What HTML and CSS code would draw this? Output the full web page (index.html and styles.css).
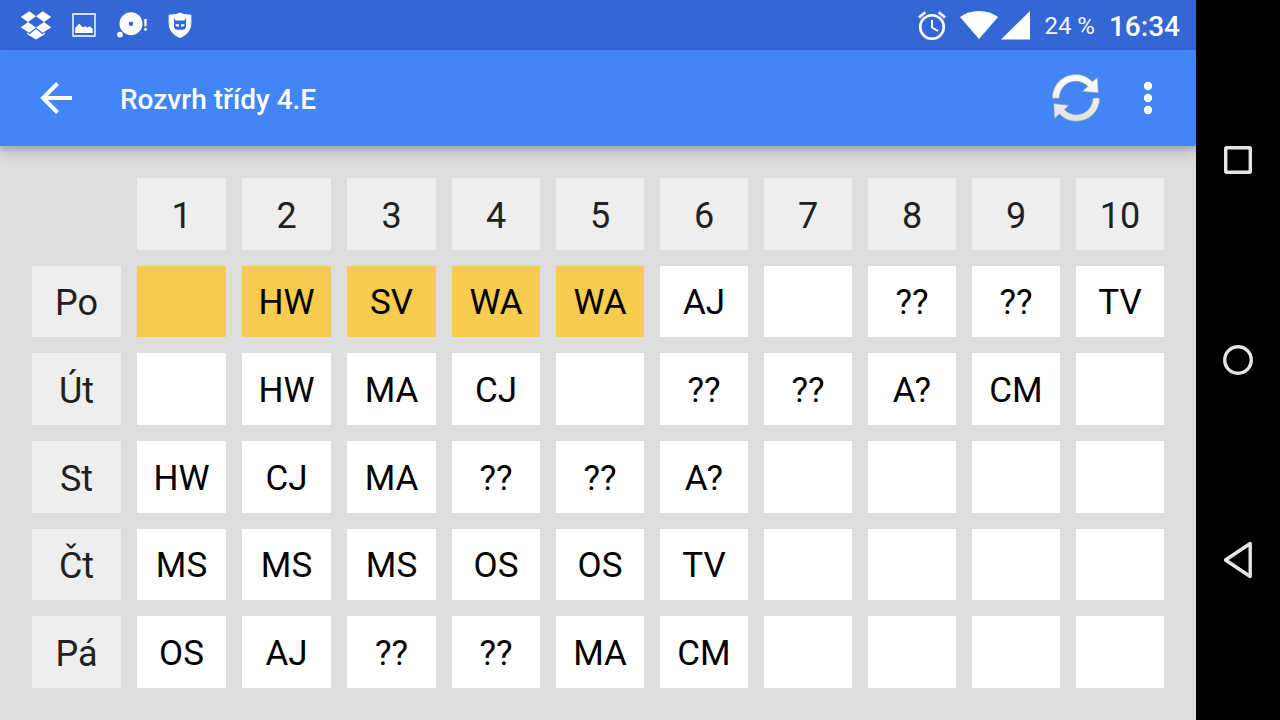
FILE: index.html
```html
<!DOCTYPE html>
<html lang="cs">
<head>
<meta charset="utf-8">
<meta name="viewport" content="width=device-width, initial-scale=1">
<title>Rozvrh třídy 4.E</title>
<link rel="stylesheet" href="styles.css">
</head>
<body>
<div class="device">
  <div class="screen">
    <div class="status">
      <div class="notices">
        <svg width="32" height="32" viewBox="0 0 32 32" fill="#fff" aria-hidden="true"><path d="M.800 8 9.300 2.200 16 7.300 8 13zM31.200 8 22.700 2.200 16 7.300 24 13zM8 13l8 5.500L9.300 23.800.800 18.500zM24 13l-8 5.500 6.700 5.300 8.500-5.300z"/><path d="M7 23.500 9.500 25.200 16 20l6.500 5.200L25 23.500V25l-9 5.500L7 25z"/></svg>
        <svg width="32" height="32" viewBox="0 0 32 32" aria-hidden="true"><path d="M5 5h22v22H5z" fill="none" stroke="#d3dff7" stroke-width="1.800"/><path d="M7.200 24v-5.200l4-4 3.800 3.700 2.200-1.200 2.300 1.300 2-1.400 3.200 2.500V24z" fill="#fff"/></svg>
        <svg width="32" height="32" viewBox="0 0 32 32" aria-hidden="true"><path fill="#fff" fill-rule="evenodd" d="M15 3.200a11.500 11.500 0 1 1 0 23 11.500 11.500 0 0 1 0-23zm0 9.200a2.300 2.300 0 1 0 0 4.600 2.300 2.300 0 0 0 0-4.600z"/><circle cx="4" cy="25.600" r="2.900" fill="#fff"/><path d="M28.200 10h2.500l-.3 7.500h-1.900z" fill="#fff"/><circle cx="29.500" cy="20.500" r="1.400" fill="#fff"/></svg>
        <svg width="32" height="32" viewBox="0 0 32 32" aria-hidden="true"><path fill="#fff" d="M16 3.500C13 5 9 5.700 4.700 5.700V14c0 7 4.500 12.500 11.300 15 6.800-2.500 11.300-8 11.300-15V5.700C23 5.700 19 5 16 3.500z"/><path d="M10.300 8.500 11.500 11.500h9L21.700 8.500 22 13v5q-.8 2.700-3 2.700h-6q-2.200 0-3-2.700v-5z" fill="#3367d6"/><path d="M11.500 15.300h3.500v2.200h-2.300q-1.200-.3-1.200-2.200zm9 0H17v2.200h2.300q1.200-.3 1.200-2.200z" fill="#fff"/></svg>
      </div>
      <div class="system">
        <svg width="30" height="32" viewBox="0 0 30 32" fill="none" stroke="#fff" aria-hidden="true"><circle cx="15" cy="18" r="11.800" stroke-width="2.600"/><path d="M15 11v7.500l6 3.500" stroke-width="2"/><path d="m2 8.500 6.300-5.300M28 8.500l-6.300-5.300" stroke-width="2.600"/></svg>
        <svg class="wifi" width="40" height="30" viewBox="0 0 40 30" fill="#fff" aria-hidden="true"><path d="M1 7Q9 1 20 1t19 6L20 29z"/></svg>
        <svg class="signal" width="30" height="30" viewBox="0 0 30 30" fill="#fff" aria-hidden="true"><path d="M29 1v28.500H0z"/></svg>
        <span class="battery">24 %</span>
        <time class="clock">16:34</time>
      </div>
    </div>
    <header class="bar">
      <button class="tool" aria-label="Zpět"><svg width="32" height="32" viewBox="0 0 32 32" fill="none" stroke="#fff" stroke-width="4" aria-hidden="true"><path d="M17.500 1.500 3 16l14.500 14.500M3 16h29"/></svg></button>
      <h1 class="title">Rozvrh třídy 4.E</h1>
      <button class="tool" aria-label="Obnovit"><svg width="48" height="48" viewBox="0 0 48 48" aria-hidden="true"><defs><linearGradient id="silver" x1="0" y1="0" x2="0" y2="48" gradientUnits="userSpaceOnUse"><stop stop-color="#fff"/><stop offset="1" stop-color="#e0e0e0"/></linearGradient></defs><g fill="url(#silver)" stroke="#8798ae" stroke-width=".6"><path d="M.300 24.200C.500 10.500 10.500.500 23.800.500c7 0 12.500 2.700 16.500 7.200L45.500 3.500l.8 15.300L30.500 17.500l5.200-5C33 9.300 28.500 7.300 23.800 7.300 14.500 7.300 7.500 14.500 7.200 24.200z"/><path d="M47.700 24C47.500 37.500 37.500 47.300 24.200 47.300c-7 0-12.700-2.900-16.700-7.300l-5 4.500L1.700 29.500l15.300 1.800-4.500 4.200c2.800 3.200 7 5.200 11.700 5.200 9.300 0 16.500-7.200 16.800-16.700z"/></g></svg></button>
      <button class="tool" aria-label="Další možnosti"><svg width="12" height="36" viewBox="0 0 12 36" fill="#fff" aria-hidden="true"><circle cx="6" cy="6" r="4.200"/><circle cx="6" cy="18" r="4.200"/><circle cx="6" cy="30" r="4.200"/></svg></button>
    </header>
    <main class="content">
      <table class="timetable">
        <colgroup><col class="wide" span="4"><col span="7"></colgroup>
        <tbody>
          <tr><td class="corner"></td><th scope="col">1</th><th scope="col">2</th><th scope="col">3</th><th scope="col">4</th><th scope="col">5</th><th scope="col">6</th><th scope="col">7</th><th scope="col">8</th><th scope="col">9</th><th scope="col">10</th></tr>
          <tr><th scope="row">Po</th><td class="past"></td><td class="past">HW</td><td class="past">SV</td><td class="past">WA</td><td class="past">WA</td><td>AJ</td><td></td><td>??</td><td>??</td><td>TV</td></tr>
          <tr><th scope="row">Út</th><td></td><td>HW</td><td>MA</td><td>CJ</td><td></td><td>??</td><td>??</td><td>A?</td><td>CM</td><td></td></tr>
          <tr><th scope="row">St</th><td>HW</td><td>CJ</td><td>MA</td><td>??</td><td>??</td><td>A?</td><td></td><td></td><td></td><td></td></tr>
          <tr><th scope="row">Čt</th><td>MS</td><td>MS</td><td>MS</td><td>OS</td><td>OS</td><td>TV</td><td></td><td></td><td></td><td></td></tr>
          <tr><th scope="row">Pá</th><td>OS</td><td>AJ</td><td>??</td><td>??</td><td>MA</td><td>CM</td><td></td><td></td><td></td><td></td></tr>
        </tbody>
      </table>
    </main>
  </div>
  <nav class="keys" aria-label="Systémová navigace">
    <button class="key" aria-label="Přehled"><svg width="40" height="40" viewBox="0 0 40 40" fill="none" stroke="#e6e6e6" stroke-width="3.400" aria-hidden="true"><rect x="7.700" y="7.700" width="24.600" height="24.600" rx="1"/></svg></button>
    <button class="key" aria-label="Domů"><svg width="40" height="40" viewBox="0 0 40 40" fill="none" stroke="#e6e6e6" stroke-width="3.400" aria-hidden="true"><circle cx="20" cy="20" r="13.300"/></svg></button>
    <button class="key" aria-label="Zpět"><svg width="40" height="40" viewBox="0 0 40 40" fill="none" stroke="#e6e6e6" stroke-width="3.400" stroke-linejoin="round" aria-hidden="true"><path d="M32.200 3.500v33L7.500 20z"/></svg></button>
  </nav>
</div>
</body>
</html>
```
FILE: styles.css
```css
* {
  box-sizing: border-box;
}

body {
  margin: 0;
  font-family: Roboto, "Noto Sans", sans-serif;
  background: #000;
}

svg {
  display: block;
}

button {
  display: flex;
  align-items: center;
  justify-content: center;
  padding: 0;
  border: 0;
  background: none;
  cursor: pointer;
}

.device {
  display: flex;
  min-height: 100vh;
}

.screen {
  display: flex;
  flex: 1;
  flex-direction: column;
  overflow: hidden;
  background: #ddd;
}

.status {
  display: flex;
  align-items: center;
  justify-content: space-between;
  height: 50px;
  padding: 0 16px 0 20px;
  background: #3367d6;
  color: #fff;
}

.notices {
  display: flex;
  gap: 16px;
}

.system {
  display: flex;
  align-items: center;
}

.wifi {
  margin-left: 12px;
}

.signal {
  margin-left: 2px;
}

.battery {
  margin-left: 13px;
  padding-top: 2px;
  color: #f4f7fd;
  font-size: 24px;
}

.clock {
  margin-left: 14px;
  padding-top: 2px;
  font-size: 28px;
  font-weight: 500;
}

.bar {
  z-index: 1;
  display: flex;
  align-items: center;
  gap: 24px;
  height: 96px;
  padding: 0 24px 0 32px;
  background: #4285f4;
  box-shadow: 0 4px 4px rgba(0, 0, 0, 0.12), 0 8px 14px rgba(0, 0, 0, 0.14);
}

.tool {
  min-width: 48px;
  min-height: 48px;
}

.title {
  flex: 1;
  margin: 0;
  padding: 2px 0 0 16px;
  color: #fff;
  font-size: 28px;
  font-weight: 500;
}

.content {
  display: flex;
  flex: 1;
  padding: 16px;
}

.timetable {
  width: 100%;
  border-spacing: 16px;
  table-layout: fixed;
  line-height: 40px;
  text-align: center;
}

.timetable .wide {
  width: 89px;
}

.timetable th {
  padding: 4px 0 0;
  background: #eee;
  color: #212121;
  font-size: 36px;
  font-weight: 400;
}

.timetable td {
  padding: 4px 0 0;
  background: #fff;
  color: #000;
  font-size: 35px;
}

.timetable .past {
  background: #f7cb4d;
}

.timetable .corner {
  background: none;
}

.keys {
  display: flex;
  flex-direction: column;
  width: 84px;
  padding: 60px 0;
  background: #000;
}

.key {
  flex: 1;
}
```
